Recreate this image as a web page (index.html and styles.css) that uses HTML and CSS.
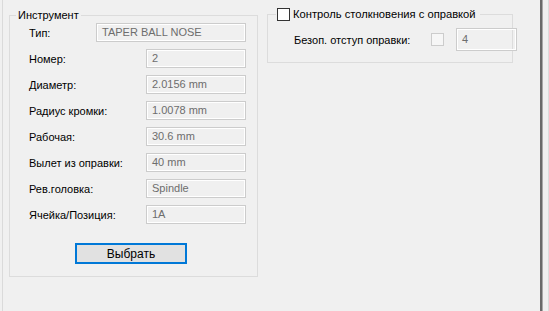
FILE: index.html
```html
<!DOCTYPE html>
<html lang="ru">

<head>
    <meta charset="UTF-8">
    <title>Инструмент</title>
    <link rel="stylesheet" href="styles.css">
</head>

<body>
    <div class="window">
        <div class="panel">
            <fieldset class="group tool">
                <legend>Инструмент</legend>

                <div class="row">
                    <label class="short">Тип:</label>
                    <div class="field wide">TAPER BALL NOSE</div>
                </div>
                <div class="row">
                    <label>Номер:</label>
                    <div class="field">2</div>
                </div>
                <div class="row">
                    <label>Диаметр:</label>
                    <div class="field">2.0156 mm</div>
                </div>
                <div class="row">
                    <label>Радиус кромки:</label>
                    <div class="field">1.0078 mm</div>
                </div>
                <div class="row">
                    <label>Рабочая:</label>
                    <div class="field">30.6 mm</div>
                </div>
                <div class="row">
                    <label>Вылет из оправки:</label>
                    <div class="field">40 mm</div>
                </div>
                <div class="row">
                    <label>Рев.головка:</label>
                    <div class="field">Spindle</div>
                </div>
                <div class="row">
                    <label>Ячейка/Позиция:</label>
                    <div class="field">1A</div>
                </div>

                <button type="button" class="select-btn">Выбрать</button>
            </fieldset>

            <fieldset class="group holder">
                <legend><span class="check"></span>Контроль столкновения с оправкой</legend>

                <div class="row holder-row">
                    <label class="holder-label">Безоп. отступ оправки:</label>
                    <span class="check disabled"></span>
                    <div class="field small">4</div>
                </div>
            </fieldset>
        </div>
        <div class="divider"></div>
        <div class="edge"></div>
    </div>
</body>

</html>
```

FILE: styles.css
```css
html,
body {
    margin: 0;
    height: 100%;
}

body {
    font-family: "Liberation Sans", Arial, sans-serif;
    font-size: 11px;
    color: #000;
    background-color: #f0f0f0;
    overflow: hidden;
}

.window {
    display: flex;
    height: 311px;
}

.panel {
    flex: 1;
    display: flex;
    align-items: flex-start;
    margin-left: 2px;
    border-left: 1px solid #dadada;
    padding-left: 6px;
}

.group {
    margin: 0;
    padding: 0;
    min-width: 0;
    border: 1px solid #dcdcdc;
    box-sizing: border-box;
}

.group legend {
    line-height: 13px;
    padding: 0 2px;
    margin-left: 6px;
}

.tool {
    width: 249px;
    height: 268px;
    margin-top: 9px;
    padding-top: 1px;
}

.row {
    display: flex;
    align-items: center;
    height: 19px;
    margin-bottom: 7px;
}

.row label {
    width: 117px;
    padding-left: 19px;
    flex-shrink: 0;
}

.row label.short {
    width: 67px;
}

.field {
    width: 100px;
    height: 19px;
    box-sizing: border-box;
    border: 1px solid #cccccc;
    box-shadow: inset 0 0 0 1px #ffffff;
    color: #6d6d6d;
    padding: 2px 0 0 5px;
    line-height: 13px;
    white-space: nowrap;
}

.field.wide {
    width: 150px;
}

.select-btn {
    display: block;
    margin: 19px 0 0 65px;
    width: 112px;
    height: 21px;
    box-sizing: border-box;
    border: 2px solid #0078d7;
    background-color: #e1e1e1;
    font-family: inherit;
    font-size: 12px;
    color: #000;
    padding: 0;
}

.holder {
    width: 246px;
    height: 56px;
    margin-left: 9px;
    margin-top: 7px;
}

.holder legend {
    display: flex;
    align-items: center;
    line-height: 14px;
    padding: 0 4px 0 1px;
    margin-left: 8px;
    font-size: 11.2px;
}

.check {
    display: inline-block;
    width: 13px;
    height: 13px;
    box-sizing: border-box;
    border: 1px solid #333333;
    background-color: #ffffff;
    margin-right: 3px;
    flex-shrink: 0;
}

.check.disabled {
    border-color: #cccccc;
    background-color: #f6f6f6;
    margin-right: 12px;
}

.holder-row {
    width: 250px;
    height: 23px;
    margin: 7px 0 0;
}

.holder-row .holder-label {
    width: 163px;
    padding-left: 26px;
    box-sizing: border-box;
}

.field.small {
    width: 61px;
    height: 23px;
    padding-top: 4px;
    flex-shrink: 0;
}

.divider {
    width: 2px;
    background-color: #6a6a6a;
    border-right: 1px solid #a8a8a8;
}

.edge {
    width: 5px;
    border-right: 1px solid #dcdcdc;
}
```
